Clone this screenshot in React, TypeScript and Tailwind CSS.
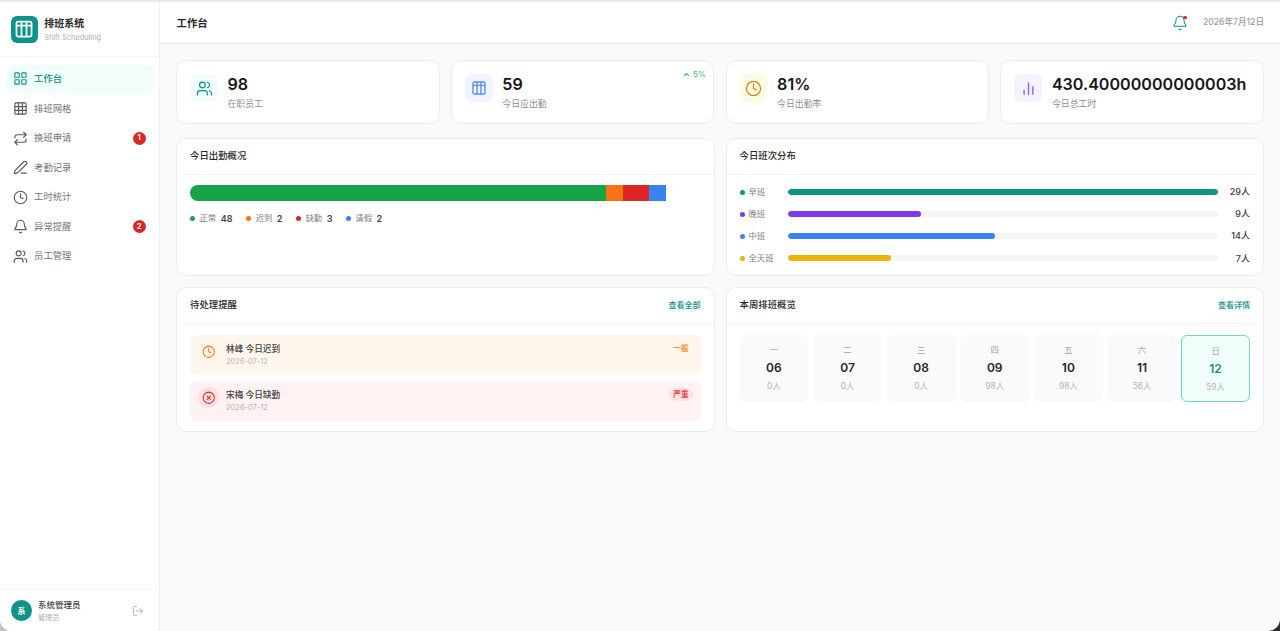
import React from "react";
import { LayoutGrid, Grid3x3, Repeat, PenLine, Clock, Bell, Users, LogOut, ChevronUp, ChartNoAxesColumn, XCircle } from "lucide-react";

const font = { fontFamily: '"Inter","Noto Sans CJK SC",sans-serif' };

const nav = [
  { label: "工作台", icon: LayoutGrid, active: true },
  { label: "排班网格", icon: Grid3x3 },
  { label: "换班申请", icon: Repeat, badge: 1 },
  { label: "考勤记录", icon: PenLine },
  { label: "工时统计", icon: Clock },
  { label: "异常提醒", icon: Bell, badge: 2 },
  { label: "员工管理", icon: Users },
];

const TableIcon = ({ className }: { className?: string }) => (
  <svg viewBox="0 0 24 24" fill="none" stroke="currentColor" strokeWidth="2.1" strokeLinecap="round" strokeLinejoin="round" className={className}>
    <rect x="3" y="3" width="18" height="18" rx="2" />
    <path d="M3 8h18M9 3v18M15 3v18" />
  </svg>
);

function Stat({ icon, bg, value, label, trend }: { icon: React.ReactNode; bg: string; value: string; label: string; trend?: boolean }) {
  return (
    <div className="relative flex h-[63.5px] items-start gap-[9.5px] rounded-[10px] border border-[#ebebeb] bg-white px-[13px] pt-[13px]">
      <div className={`flex h-[28px] w-[28px] shrink-0 items-center justify-center rounded-[7px] ${bg}`}>{icon}</div>
      <div className="flex flex-col">
        <div className="text-[16.1px] leading-[21px] font-semibold text-[#171717] whitespace-nowrap">{value}</div>
        <div className="mt-[2px] text-[8.9px] leading-[13px] text-[#8f8f8f]">{label}</div>
      </div>
      {trend && (
        <div className="absolute right-[7.5px] top-[8px] flex items-center gap-[2px] text-[8px] leading-[10px] font-medium text-[#4cbb74]">
          <ChevronUp className="h-[9px] w-[9px]" strokeWidth={2.8} />5%
        </div>
      )}
    </div>
  );
}

function CardHead({ title, link }: { title: string; link?: string }) {
  return (
    <div className="flex h-[36.5px] shrink-0 items-center justify-between border-b border-[#f5f5f5] px-[13px]">
      <span className="text-[9.4px] font-medium text-[#262626]">{title}</span>
      {link && <span className="text-[8px] font-medium text-[#0d9488]">{link}</span>}
    </div>
  );
}

const legend = [
  ["正常", "48", "bg-[#16a34a]"],
  ["迟到", "2", "bg-[#f97316]"],
  ["缺勤", "3", "bg-[#dc2626]"],
  ["请假", "2", "bg-[#3b82f6]"],
];

const shifts = [
  ["早班", "29人", "bg-[#0d9488]", "w-full"],
  ["晚班", "9人", "bg-[#7c3aed]", "w-[31%]"],
  ["中班", "14人", "bg-[#3b82f6]", "w-[48.2%]"],
  ["全天班", "7人", "bg-[#eab308]", "w-[24%]"],
];

const days = [
  ["一", "06", "0人"],
  ["二", "07", "0人"],
  ["三", "08", "0人"],
  ["四", "09", "98人"],
  ["五", "10", "98人"],
  ["六", "11", "56人"],
  ["日", "12", "59人"],
];

export default function App() {
  return (
    <div style={font} className="h-[631px] w-[1280px] overflow-hidden bg-gradient-to-r from-[#c4c4c4] to-[#2a2a2a]">
      <div className="h-[2px] bg-[#e8e8e8]" />
      <div className="flex h-[629px] overflow-hidden rounded-b-[12px] bg-[#fafafa]">
        <aside className="flex w-[160px] shrink-0 flex-col border-r border-[#f0f0f0] bg-white">
          <div className="flex h-[55px] shrink-0 items-center gap-[6.5px] border-b border-[#f5f5f5] pl-[10.7px]">
            <div className="flex h-[27px] w-[27px] items-center justify-center rounded-[6px] bg-[#0d9488]">
              <TableIcon className="h-[20px] w-[20px] text-white" />
            </div>
            <div className="flex flex-col">
              <span className="text-[10px] leading-[15px] font-semibold text-[#262626]">排班系统</span>
              <span className="mt-[1px] text-[7.4px] leading-[11px] text-[#b0b0b0]">Shift Scheduling</span>
            </div>
          </div>
          <nav className="flex flex-1 flex-col gap-[1.8px] pl-[5.5px] pr-[5.5px] pt-[8px]">
            {nav.map((n) => (
              <div key={n.label} className={`flex h-[27.8px] items-center gap-[6.6px] rounded-[7px] pl-[7px] pr-[8px] ${n.active ? "bg-[#f0fdfa] text-[#0d9488]" : "text-[#595959]"}`}>
                <n.icon className="h-[15px] w-[15px] shrink-0" strokeWidth={1.8} />
                <span className={`flex-1 text-[9.3px] ${n.active ? "font-medium" : "text-[#737373]"}`}>{n.label}</span>
                {n.badge && (
                  <span className="flex h-[13px] w-[13px] items-center justify-center rounded-full bg-[#dc2626] text-[7.5px] font-bold text-white">{n.badge}</span>
                )}
              </div>
            ))}
          </nav>
          <div className="flex h-[42px] shrink-0 items-center gap-[6px] border-t border-[#f5f5f5] pl-[11px] pr-[15px]">
            <div className="flex h-[21px] w-[21px] shrink-0 items-center justify-center rounded-full bg-[#0d9488] text-[8px] font-semibold text-white">系</div>
            <div className="flex flex-1 flex-col">
              <span className="text-[8.5px] leading-[13px] font-medium text-[#404040]">系统管理员</span>
              <span className="mt-[1px] text-[7.1px] leading-[10px] text-[#b0b0b0]">管理员</span>
            </div>
            <LogOut className="h-[12px] w-[12px] text-[#a3a3a3]" strokeWidth={1.6} />
          </div>
        </aside>
        <main className="flex min-w-0 flex-1 flex-col">
          <header className="flex h-[42px] shrink-0 items-center justify-between border-b border-[#ebebeb] bg-white pl-[16.5px] pr-[16px]">
            <span className="pt-[2px] text-[10.4px] font-semibold text-[#262626]">工作台</span>
            <div className="flex items-center gap-[15px]">
              <div className="relative">
                <Bell className="h-[16px] w-[16px] text-[#0d9488]" strokeWidth={1.6} />
                <span className="absolute right-[1px] top-[1px] h-[3.5px] w-[3.5px] rounded-full bg-[#dc2626]" />
              </div>
              <span className="text-[8.6px] font-medium text-[#9a9a9a]">2026年7月12日</span>
            </div>
          </header>
          <div className="flex flex-col pl-[16px] pr-[16px] pt-[16px]">
            <div className="grid grid-cols-4 gap-[11.2px]">
              <Stat bg="bg-[#f0fdfa]" icon={<Users className="h-[17px] w-[17px] text-[#0d9488]" strokeWidth={1.7} />} value="98" label="在职员工" />
              <Stat bg="bg-[#eff6ff]" icon={<TableIcon className="h-[16px] w-[16px] text-[#5b91f5]" />} value="59" label="今日应出勤" trend />
              <Stat bg="bg-[#fefce8]" icon={<Clock className="h-[17px] w-[17px] text-[#ca8a04]" strokeWidth={1.8} />} value="81%" label="今日出勤率" />
              <Stat bg="bg-[#f5f3ff]" icon={<ChartNoAxesColumn className="h-[15px] w-[15px] text-[#8b5cf6]" strokeWidth={2.2} />} value="430.40000000000003h" label="今日总工时" />
            </div>
            <div className="mt-[14px] grid grid-cols-2 gap-[11px]">
              <section className="h-[138px] rounded-[10px] border border-[#ebebeb] bg-white">
                <CardHead title="今日出勤概况" />
                <div className="px-[13px] pt-[10px]">
                  <div className="flex h-[16px] w-[476px] overflow-hidden rounded-l-full">
                    <div className="w-[416px] bg-[#16a34a]" />
                    <div className="w-[17px] bg-[#f97316]" />
                    <div className="w-[26px] bg-[#dc2626]" />
                    <div className="w-[17px] bg-[#3b82f6]" />
                  </div>
                  <div className="mt-[11px] flex items-center gap-[13.5px]">
                    {legend.map(([l, v, c]) => (
                      <div key={l} className="flex items-center gap-[4.5px] leading-[13px]">
                        <span className={`h-[5px] w-[5px] rounded-full ${c}`} />
                        <span className="text-[8.4px] text-[#808080]">{l}</span>
                        <span className="text-[9px] font-semibold text-[#404040]">{v}</span>
                      </div>
                    ))}
                  </div>
                </div>
              </section>
              <section className="h-[138px] rounded-[10px] border border-[#ebebeb] bg-white">
                <CardHead title="今日班次分布" />
                <div className="flex flex-col gap-[16.1px] px-[13px] pt-[14px]">
                  {shifts.map(([l, v, c, w]) => (
                    <div key={l} className="flex h-[6px] items-center">
                      <span className={`h-[5px] w-[5px] shrink-0 rounded-full ${c}`} />
                      <span className="ml-[4px] w-[39px] shrink-0 text-[8.4px] text-[#808080]">{l}</span>
                      <div className="h-[6px] flex-1 overflow-hidden rounded-full bg-[#f5f5f5]">
                        <div className={`h-full rounded-full ${c} ${w}`} />
                      </div>
                      <span className="w-[32px] shrink-0 text-right text-[9px] font-medium text-[#404040]">{v}</span>
                    </div>
                  ))}
                </div>
              </section>
            </div>
            <div className="mt-[11px] grid grid-cols-2 gap-[11px]">
              <section className="h-[145px] rounded-[10px] border border-[#ebebeb] bg-white">
                <CardHead title="待处理提醒" link="查看全部" />
                <div className="flex flex-col gap-[6px] px-[13px] pt-[11px]">
                  <div className="relative flex h-[40px] items-start gap-[7px] rounded-[6px] bg-[#fff7ed] pl-[8px] pr-[8px] pt-[6px]">
                    <div className="flex h-[21px] w-[21px] shrink-0 items-center justify-center">
                      <Clock className="h-[13.5px] w-[13.5px] text-[#f97316]" strokeWidth={1.8} />
                    </div>
                    <div className="mt-[1px] flex flex-1 flex-col">
                      <span className="text-[8.65px] leading-[14px] font-medium text-[#404040]">林峰 今日迟到</span>
                      <span className="text-[7.5px] leading-[11px] text-[#b5b5b5]">2026-07-12</span>
                    </div>
                    <span className="absolute right-[12px] top-[9px] text-[7.6px] leading-[10px] font-semibold text-[#fb923c]">一般</span>
                  </div>
                  <div className="relative flex h-[40px] items-start gap-[7px] rounded-[6px] bg-[#fef2f2] pl-[8px] pr-[8px] pt-[6px]">
                    <div className="flex h-[21px] w-[21px] shrink-0 items-center justify-center rounded-full bg-[#fee2e2]">
                      <XCircle className="h-[13.5px] w-[13.5px] text-[#dc2626]" strokeWidth={1.8} />
                    </div>
                    <div className="mt-[1px] flex flex-1 flex-col">
                      <span className="text-[8.65px] leading-[14px] font-medium text-[#404040]">宋梅 今日缺勤</span>
                      <span className="text-[7.5px] leading-[11px] text-[#b5b5b5]">2026-07-12</span>
                    </div>
                    <span className="absolute right-[8px] top-[7px] rounded-full bg-[#fee2e2] px-[4px] py-[1.5px] text-[7.6px] leading-[10px] font-semibold text-[#ef4444]">严重</span>
                  </div>
                </div>
              </section>
              <section className="h-[145px] rounded-[10px] border border-[#ebebeb] bg-white">
                <CardHead title="本周排班概览" link="查看详情" />
                <div className="grid grid-cols-7 gap-[4.8px] px-[13px] pt-[11px]">
                  {days.map(([d, n, c], i) => {
                    const on = i === 6;
                    return (
                      <div key={d} className={`flex h-[67px] flex-col items-center rounded-[6px] pt-[9px] ${on ? "border border-[#6fd8c8] bg-[#f0fdfa]" : "bg-[#fafafa]"}`}>
                        <span className="text-[8.4px] leading-[12px] text-[#a3a3a3]">{d}</span>
                        <span className={`mt-[3px] text-[12px] leading-[18px] font-semibold ${on ? "text-[#0d9488]" : "text-[#262626]"}`}>{n}</span>
                        <span className="mt-[4px] text-[8.4px] leading-[11px] text-[#b5b5b5]">{c}</span>
                      </div>
                    );
                  })}
                </div>
              </section>
            </div>
          </div>
        </main>
      </div>
    </div>
  );
}
